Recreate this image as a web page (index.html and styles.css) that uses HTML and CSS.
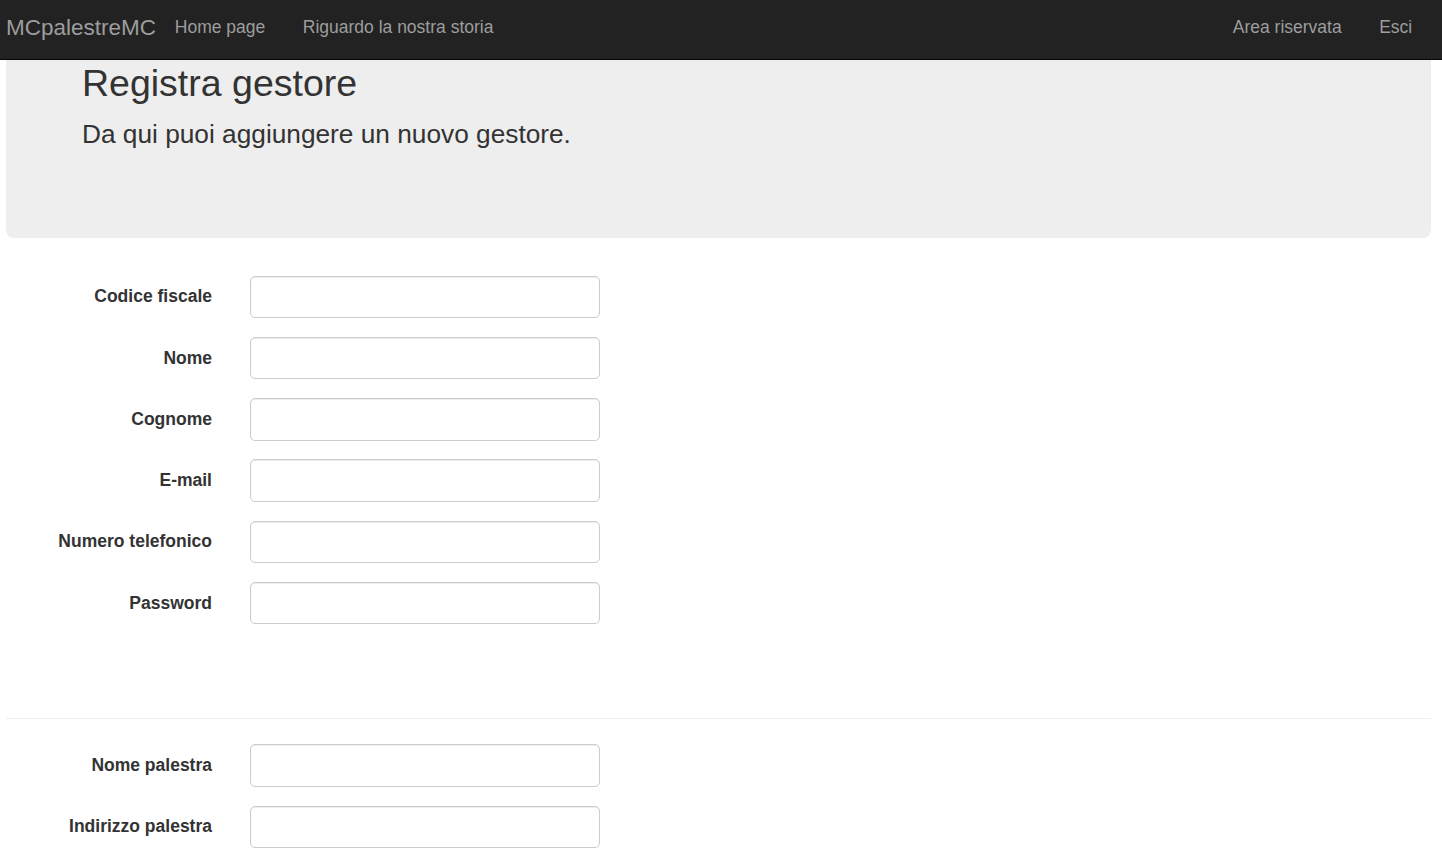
FILE: index.html
```html
<!DOCTYPE html>
<html lang="it">
<head>
<meta charset="utf-8">
<title>Registra gestore</title>
<link rel="stylesheet" href="styles.css">
</head>
<body>
<nav class="navbar">
  <a class="brand" href="#">MCpalestreMC</a>
  <ul class="nav">
    <li><a href="#">Home page</a></li>
    <li><a href="#">Riguardo la nostra storia</a></li>
  </ul>
  <ul class="nav nav-right">
    <li><a href="#">Area riservata</a></li>
    <li><a href="#">Esci</a></li>
  </ul>
</nav>

<div class="jumbotron">
  <h2>Registra gestore</h2>
  <p>Da qui puoi aggiungere un nuovo gestore.</p>
</div>

<form class="form">
  <div class="form-group"><label>Codice fiscale</label><input type="text" class="form-control"></div>
  <div class="form-group"><label>Nome</label><input type="text" class="form-control"></div>
  <div class="form-group"><label>Cognome</label><input type="text" class="form-control"></div>
  <div class="form-group"><label>E-mail</label><input type="email" class="form-control"></div>
  <div class="form-group"><label>Numero telefonico</label><input type="text" class="form-control"></div>
  <div class="form-group"><label>Password</label><input type="password" class="form-control"></div>
  <hr class="divider">
  <div class="form-group"><label>Nome palestra</label><input type="text" class="form-control"></div>
  <div class="form-group"><label>Indirizzo palestra</label><input type="text" class="form-control"></div>
</form>
</body>
</html>
```

FILE: styles.css
```css
* { box-sizing: border-box; }

html, body {
  margin: 0;
  padding: 0;
  background: #fff;
  font-family: "Liberation Sans", Arial, Helvetica, sans-serif;
  color: #333;
  font-size: 17.5px;
  line-height: 1.42857;
}

.navbar {
  display: flex;
  align-items: center;
  height: 60px;
  padding: 0 11px 4px 6px;
  background: #222;
  border-bottom: 1px solid #080808;
}

.brand {
  color: #9d9d9d;
  text-decoration: none;
  font-size: 22.5px;
  line-height: 25px;
}

.nav {
  display: flex;
  list-style: none;
  margin: 0;
  padding: 0;
}

.nav a {
  display: block;
  padding: 0 18.75px;
  color: #9d9d9d;
  text-decoration: none;
  font-size: 17.5px;
  line-height: 25px;
}

.nav-right { margin-left: auto; }

.jumbotron {
  margin: 0 11px 37.5px 6px;
  padding: 3px 76px 66px;
  background: #eee;
  border-radius: 0 0 7.5px 7.5px;
}

.jumbotron h2 {
  margin: 0 0 11.5px;
  font-size: 37.5px;
  font-weight: 500;
  line-height: 1.1;
  color: #333;
}

.jumbotron p {
  margin: 0 0 18.75px;
  font-size: 26.25px;
  line-height: 37.5px;
  font-weight: 200;
}

.form {
  padding: 0 11px 0 6px;
}

.form-group {
  display: flex;
  align-items: flex-start;
  margin-bottom: 18.75px;
}

.form-group label {
  width: 206px;
  padding-top: 8.75px;
  margin-right: 38px;
  text-align: right;
  font-weight: bold;
  font-size: 17.5px;
  line-height: 25px;
  color: #333;
}

.form-control {
  width: 350px;
  height: 42.5px;
  padding: 7.5px 15px;
  font-family: inherit;
  font-size: 17.5px;
  color: #555;
  background: #fff;
  border: 1px solid #ccc;
  border-radius: 5px;
  box-shadow: inset 0 1px 1px rgba(0, 0, 0, .075);
}

.divider {
  margin: 94px 0 25px;
  border: 0;
  border-top: 1px solid #eee;
  height: 0;
}
```
